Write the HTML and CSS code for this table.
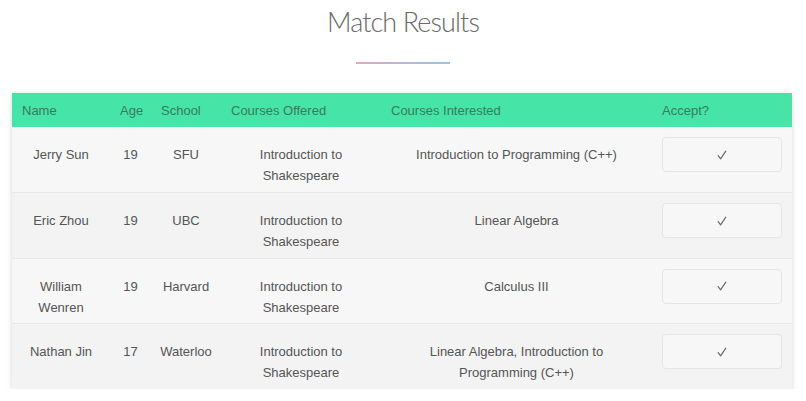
FILE: index.html
```html
<!DOCTYPE html>
<html>
<head>
<meta charset="utf-8">
<link rel="stylesheet" href="styles.css">
</head>
<body>
<header class="hero">
  <h1 class="title">Match Results</h1>
  <div class="divider"></div>
</header>
<div class="card">
  <table class="results">
    <colgroup>
      <col class="c-name"><col class="c-age"><col class="c-school"><col class="c-off"><col class="c-int"><col class="c-acc">
    </colgroup>
    <thead>
      <tr><th>Name</th><th>Age</th><th>School</th><th>Courses Offered</th><th>Courses Interested</th><th>Accept?</th></tr>
    </thead>
    <tbody>
      <tr>
        <td>Jerry Sun</td><td>19</td><td>SFU</td><td>Introduction to Shakespeare</td><td class="int">Introduction to Programming (C++)</td>
        <td class="acc"><button class="btn" aria-label="Accept"><svg class="check" viewBox="0 0 10 10"><path d="M1.2 5.6 L3.6 8.8 L8.8 1.2"/></svg></button></td>
      </tr>
      <tr>
        <td>Eric Zhou</td><td>19</td><td>UBC</td><td>Introduction to Shakespeare</td><td class="int">Linear Algebra</td>
        <td class="acc"><button class="btn" aria-label="Accept"><svg class="check" viewBox="0 0 10 10"><path d="M1.2 5.6 L3.6 8.8 L8.8 1.2"/></svg></button></td>
      </tr>
      <tr>
        <td>William Wenren</td><td>19</td><td>Harvard</td><td>Introduction to Shakespeare</td><td class="int">Calculus III</td>
        <td class="acc"><button class="btn" aria-label="Accept"><svg class="check" viewBox="0 0 10 10"><path d="M1.2 5.6 L3.6 8.8 L8.8 1.2"/></svg></button></td>
      </tr>
      <tr>
        <td>Nathan Jin</td><td>17</td><td>Waterloo</td><td>Introduction to Shakespeare</td><td class="int">Linear Algebra, Introduction to Programming (C++)</td>
        <td class="acc"><button class="btn" aria-label="Accept"><svg class="check" viewBox="0 0 10 10"><path d="M1.2 5.6 L3.6 8.8 L8.8 1.2"/></svg></button></td>
      </tr>
    </tbody>
  </table>
</div>
</body>
</html>
```
FILE: styles.css
```css
* { box-sizing: border-box; }
body {
  margin: 0;
  background: #fff;
  font-family: "Liberation Sans", Arial, sans-serif;
}
.hero {
  display: flex;
  flex-direction: column;
  align-items: center;
  padding-top: 5px;
}
.title {
  margin: 0;
  font-family: Lato, "Open Sans", sans-serif;
  font-weight: 300;
  font-size: 27px;
  letter-spacing: -0.9px;
  line-height: 34px;
  color: #6a6a6a;
}
.divider {
  margin-top: 23px;
  width: 94px;
  height: 2px;
  background: linear-gradient(to right, #e9a9ba, #b9b6d6, #93c8ea);
}
.card {
  margin: 29px 0 0 12px;
  width: 780px;
  box-shadow: 0 1px 4px rgba(0,0,0,0.13), 0 2px 10px rgba(0,0,0,0.05);
}
.results {
  width: 100%;
  border-collapse: collapse;
  table-layout: fixed;
  font-size: 13px;
}
.c-name { width: 98px; }
.c-age { width: 41px; }
.c-school { width: 70px; }
.c-off { width: 160px; }
.c-int { width: 271px; }
.c-acc { width: 140px; }
.results thead th {
  background: #46e4a6;
  color: #3b7a5c;
  font-weight: normal;
  text-align: left;
  height: 34px;
  padding: 0 0 0 10px;
}
.results tbody td {
  text-align: center;
  color: #555;
  line-height: 21px;
  padding: 17px 4px 0;
  height: 65.5px;
  vertical-align: top;
  border-top: 1px solid #e8e8e8;
}
.results tbody td.int { padding-left: 15px; padding-right: 15px; }
.results tbody tr:nth-child(odd) td { background: #f7f7f7; }
.results tbody tr:nth-child(even) td { background: #f3f3f3; }
.results tbody tr:first-child td { border-top: none; }
.results tbody td.acc {
  text-align: left;
  padding: 10px 0 0 10px;
}
.btn {
  display: flex;
  align-items: center;
  justify-content: center;
  width: 120px;
  height: 35px;
  border: 1px solid #e5e5e5;
  border-radius: 4px;
  background: #f7f7f7;
  padding: 0;
}
.check {
  width: 10px;
  height: 10px;
  fill: none;
  stroke: #6a6a6a;
  stroke-width: 1.2;
  stroke-linecap: round;
  stroke-linejoin: round;
}
```
